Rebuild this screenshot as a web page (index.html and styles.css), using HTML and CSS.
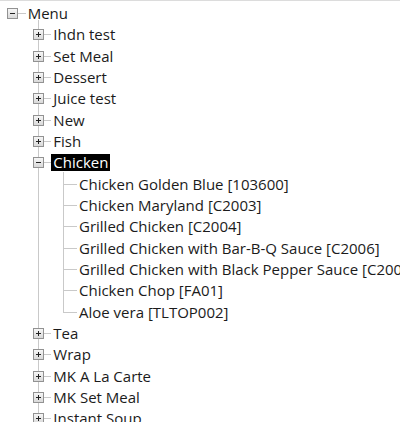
FILE: index.html
```html
<!DOCTYPE html>
<html>
<head>
<meta charset="utf-8">
<link rel="stylesheet" href="styles.css">
</head>
<body>
<div class="tree">
  <div class="row"><span class="toggle minus"></span><span class="stub"></span><span class="label">Menu</span></div>
  <ul class="children lvl1">
    <li><div class="row"><span class="toggle plus"></span><span class="stub"></span><span class="label">Ihdn test</span></div></li>
    <li><div class="row"><span class="toggle plus"></span><span class="stub"></span><span class="label">Set Meal</span></div></li>
    <li><div class="row"><span class="toggle plus"></span><span class="stub"></span><span class="label">Dessert</span></div></li>
    <li><div class="row"><span class="toggle plus"></span><span class="stub"></span><span class="label">Juice test</span></div></li>
    <li><div class="row"><span class="toggle plus"></span><span class="stub"></span><span class="label">New</span></div></li>
    <li><div class="row"><span class="toggle plus"></span><span class="stub"></span><span class="label">Fish</span></div></li>
    <li>
      <div class="row"><span class="toggle minus"></span><span class="stub"></span><span class="label selected">Chicken</span></div>
      <ul class="children lvl2">
        <li><div class="row"><span class="leaf-stub"></span><span class="label">Chicken Golden Blue [103600]</span></div></li>
        <li><div class="row"><span class="leaf-stub"></span><span class="label">Chicken Maryland [C2003]</span></div></li>
        <li><div class="row"><span class="leaf-stub"></span><span class="label">Grilled Chicken [C2004]</span></div></li>
        <li><div class="row"><span class="leaf-stub"></span><span class="label">Grilled Chicken with Bar-B-Q Sauce [C2006]</span></div></li>
        <li><div class="row"><span class="leaf-stub"></span><span class="label">Grilled Chicken with Black Pepper Sauce [C2007]</span></div></li>
        <li><div class="row"><span class="leaf-stub"></span><span class="label">Chicken Chop [FA01]</span></div></li>
        <li><div class="row"><span class="leaf-stub"></span><span class="label">Aloe vera [TLTOP002]</span></div></li>
      </ul>
    </li>
    <li><div class="row"><span class="toggle plus"></span><span class="stub"></span><span class="label">Tea</span></div></li>
    <li><div class="row"><span class="toggle plus"></span><span class="stub"></span><span class="label">Wrap</span></div></li>
    <li><div class="row"><span class="toggle plus"></span><span class="stub"></span><span class="label">MK A La Carte</span></div></li>
    <li><div class="row"><span class="toggle plus"></span><span class="stub"></span><span class="label">MK Set Meal</span></div></li>
    <li><div class="row"><span class="toggle plus"></span><span class="stub"></span><span class="label">Instant Soup</span></div></li>
  </ul>
</div>
</body>
</html>
```
FILE: styles.css
```css
html, body {
  margin: 0;
  padding: 0;
  background: #ffffff;
}

.tree {
  box-sizing: border-box;
  width: 400px;
  height: 422px;
  overflow: hidden;
  border-top: 1px solid #dcdcdc;
  padding: 2px 0 0 7px;
  font-family: "Open Sans", "Noto Sans", sans-serif;
  font-size: 15px;
  color: #1b1b1b;
  white-space: nowrap;
}

.row {
  height: 21.33px;
  display: flex;
  align-items: center;
}

.toggle {
  position: relative;
  z-index: 1;
  flex: none;
  box-sizing: border-box;
  width: 11px;
  height: 11px;
  border: 1px solid #929292;
  background: linear-gradient(#f6f6f6, #d9d9d9);
}

.toggle::before {
  content: "";
  position: absolute;
  left: 2px;
  top: 4px;
  width: 5px;
  height: 1px;
  background: #222;
}

.toggle.plus::after {
  content: "";
  position: absolute;
  left: 4px;
  top: 2px;
  width: 1px;
  height: 5px;
  background: #222;
}

.stub {
  flex: none;
  width: 7.7px;
  height: 1px;
  background: #c9c9c9;
}

.leaf-stub {
  flex: none;
  width: 18.7px;
  height: 1px;
  background: linear-gradient(to right, transparent 5px, #c9c9c9 5px);
}

.label {
  padding: 0 2px;
  line-height: 17px;
}

.label.selected {
  background: #000;
  color: #fff;
}

.children {
  position: relative;
  list-style: none;
  margin: 0 0 0 25.67px;
  padding: 0;
}

.children::before {
  content: "";
  position: absolute;
  left: 5px;
  width: 1px;
  background: #c9c9c9;
}

.lvl1::before {
  top: -4px;
  bottom: 0;
  height: 600px;
}

.lvl2::before {
  top: -2px;
  bottom: 10.67px;
}
```
